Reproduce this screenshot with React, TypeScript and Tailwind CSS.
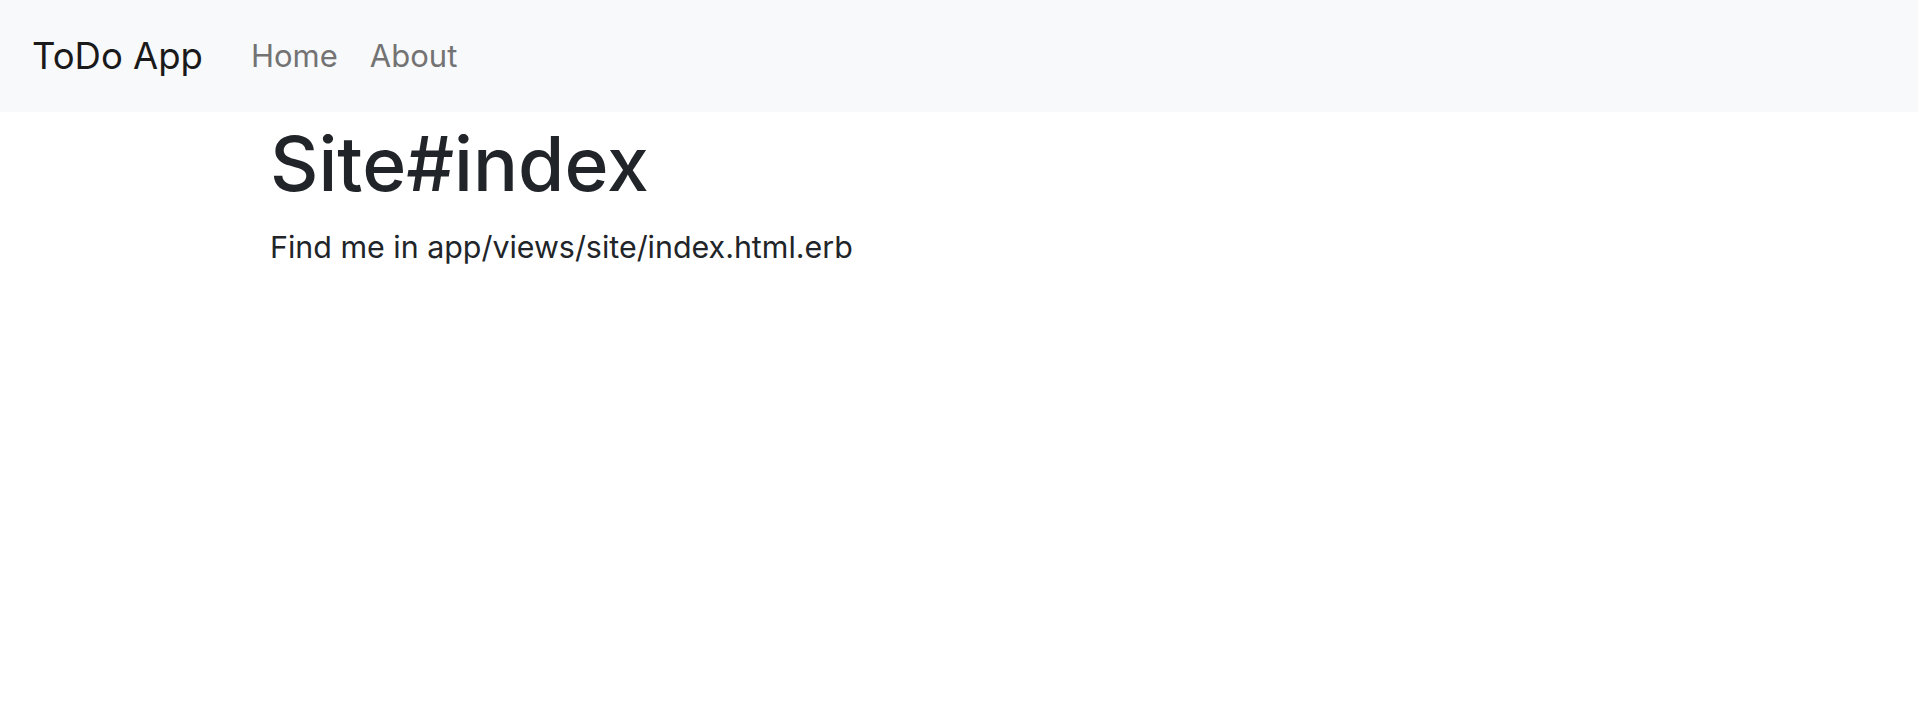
export default function App() {
  return (
    <div className="min-h-screen bg-white text-[#212529]" style={{ fontFamily: 'Inter, "Liberation Sans", Arial, sans-serif' }}>
      {/* Navbar */}
      <nav className="flex h-[112px] items-center bg-[#f8f9fa] px-[32px]">
        <a href="#" className="mr-[32px] text-[36.5px] leading-[60px] text-[#1a1a1a]">
          ToDo App
        </a>
        <ul className="flex items-center">
          <li>
            <a href="#" className="block px-[16px] text-[31px] leading-[48px] text-[#737373]">
              Home
            </a>
          </li>
          <li>
            <a href="#" className="block px-[16px] text-[31px] leading-[48px] text-[#737373]">
              About
            </a>
          </li>
        </ul>
      </nav>

      <main className="mx-auto max-w-[1440px] px-[31px]">
        <h1 className="mt-[7px] mb-[16px] text-[75px] leading-[1.2] font-medium">Site#index</h1>
        <p className="text-[30.4px] leading-[1.5]">Find me in app/views/site/index.html.erb</p>
      </main>
    </div>
  );
}
